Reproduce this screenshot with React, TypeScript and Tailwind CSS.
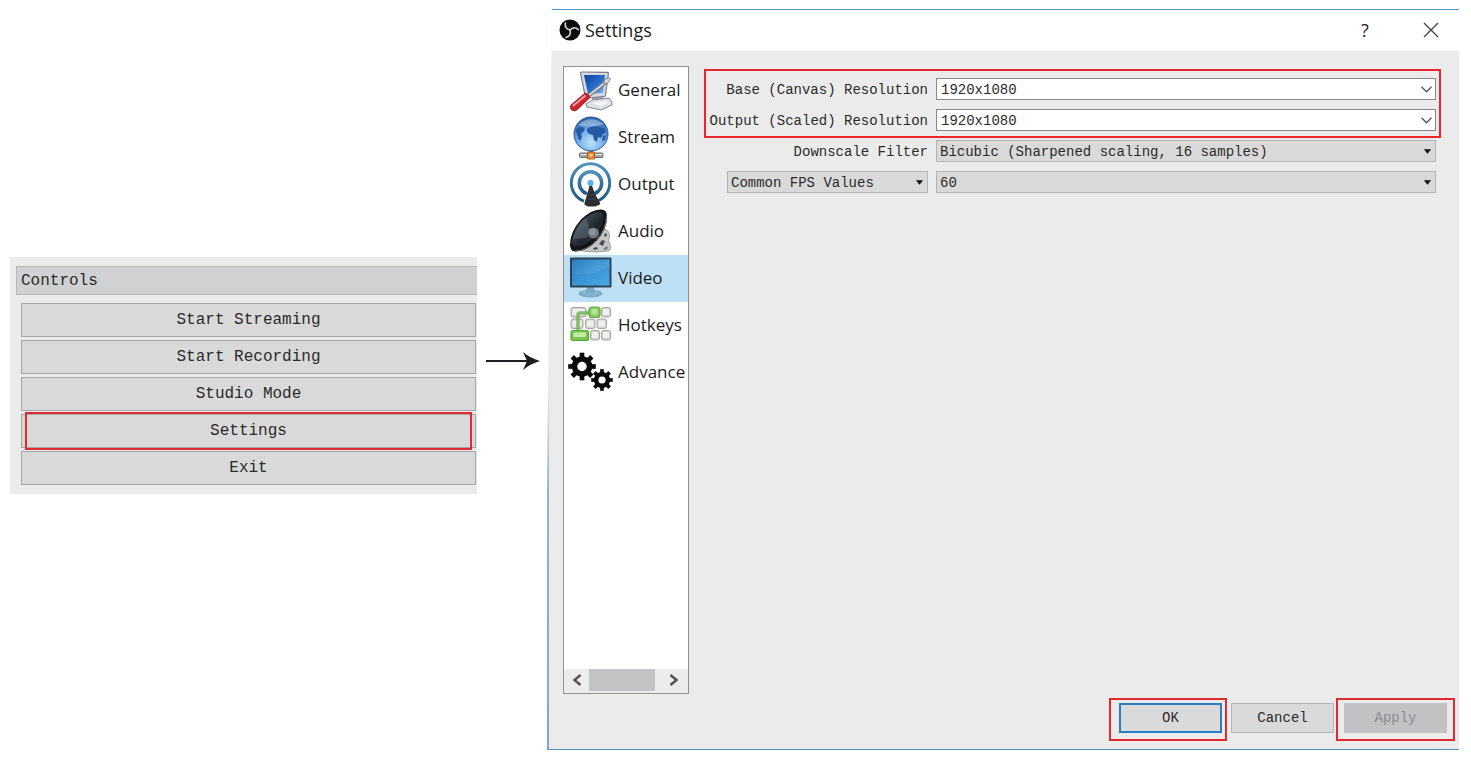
import { useState } from "react";
import type { ReactNode } from "react";

const mono = "font-['Liberation_Mono','Noto_Sans_CJK_SC',monospace]";
const sans = "font-['Open_Sans','Noto_Sans',sans-serif]";

function ObsLogo() {
  return (
    <svg viewBox="0 0 22 22" className="w-[22px] h-[22px] flex-shrink-0" aria-hidden="true">
      <circle cx="11" cy="11" r="10.5" fill="#0b0b0b" />
      <g fill="none" stroke="#cfcfcf" strokeWidth="1.7" strokeLinecap="round">
        <path d="M6.500 4C5.500 7.500 7.500 10.500 11 11" />
        <path d="M6.500 4C5.500 7.500 7.500 10.500 11 11" transform="rotate(120 11 11)" />
        <path d="M6.500 4C5.500 7.500 7.500 10.500 11 11" transform="rotate(240 11 11)" />
      </g>
    </svg>
  );
}

function GeneralIcon() {
  return (
    <>
      <defs>
        <linearGradient id="screen" x1="0" y1="0" x2="1" y2="1">
          <stop offset="0" stopColor="#0b3f9c" />
          <stop offset="0.6" stopColor="#2f74d0" />
          <stop offset="1" stopColor="#8fbdf0" />
        </linearGradient>
      </defs>
      <path d="M24 29l9-1 2 6-11 2z" fill="#9fa3ae" />
      <path d="M18 37l6-4 17-2 3 4v3l-11 5-14-3z" fill="#dfe1e8" stroke="#85878f" strokeWidth="1" />
      <path d="M24 36l14-2 2 2-8 3z" fill="#f6f6fa" />
      <path d="M12.500 6q0-1 1-1l26 .3q1 0 .9 1L37.500 28q-.2 1.500-1.500 1.600L19 31q-1.400 0-1.700-1.400z" fill="#d8dae2" stroke="#777a84" strokeWidth="1.200" />
      <path d="M16 8h21L35 26l-15 1z" fill="url(#screen)" />
      <path d="M20 29L38 15" stroke="#6f7177" strokeWidth="3.500" />
      <path d="M20.500 28.500L38.500 14.500" stroke="#d4d5d8" strokeWidth="2" />
      <path d="M36 13l5-2.500 1.500 1.500-3 4.500-3.500.5z" fill="#d5d6da" stroke="#6f7177" strokeWidth=".8" />
      <path d="M3 38L16.500 26.500q1.500-1 3 .500l1.500 1.500q1.500 1.500 0 3L9.500 42.500q-3 2.500-5.700.6Q1.500 41 3 38z" fill="#c9252d" stroke="#8c1419" strokeWidth=".8" />
      <path d="M5.500 38.500L17 29" stroke="#f39a9a" strokeWidth="2.200" strokeLinecap="round" />
    </>
  );
}

function StreamIcon() {
  return (
    <>
      <defs>
        <radialGradient id="globe" cx=".5" cy=".75" r=".75">
          <stop offset="0" stopColor="#c0e3fb" />
          <stop offset=".5" stopColor="#72aee8" />
          <stop offset="1" stopColor="#2758aa" />
        </radialGradient>
      </defs>
      <rect x="20.500" y="34" width="5" height="6" fill="#8b8d90" />
      <rect x="11.500" y="39" width="23.500" height="4.500" rx="1" fill="#a5a6a8" stroke="#66686b" strokeWidth="1" />
      <path d="M12.500 40.500h22" stroke="#e5e5e5" strokeWidth="1" />
      <rect x="19.500" y="38" width="7" height="7" rx="1" fill="#f08a35" stroke="#a9581b" strokeWidth="1" />
      <rect x="21.500" y="40" width="3" height="2.500" fill="#ffd09a" />
      <circle cx="23" cy="20" r="17" fill="url(#globe)" stroke="#2c59a4" strokeWidth="1" />
      <path d="M7.500 17q1-3 3.500-4l4 .500 2 1.500-2 3-2 2 1 3-2 4-2-3-1-4z" fill="#2559a4" />
      <path d="M19 15l3-2 7-1 7 2 2 4-3 2-2 4-3-1-1 5-3-2-1-5-4-1-2-3z" fill="#2559a4" />
      <path d="M35 22l3-1-1 5-3 1z" fill="#2559a4" />
      <path d="M10 11Q22 0 36 10 24 14 10 11z" fill="#fff" opacity=".35" />
    </>
  );
}

function OutputIcon() {
  return (
    <>
      <defs>
        <linearGradient id="rings" x1="0" y1="0" x2="0" y2="1">
          <stop offset="0" stopColor="#4f92bd" />
          <stop offset="1" stopColor="#1f587e" />
        </linearGradient>
      </defs>
      <circle cx="22.500" cy="22" r="19.200" fill="#fff" stroke="url(#rings)" strokeWidth="3" />
      <circle cx="22.500" cy="22" r="11.200" fill="none" stroke="url(#rings)" strokeWidth="3.500" />
      <path d="M22.500 24L14 45h18z" fill="#fff" />
      <path d="M22 23h1.500l3 9 5.500 10q.5 1.500-1 2l-4 1.500h-7L17 44q-1-.5-.500-2l3-10z" fill="#2b2d2f" />
      <path d="M21 30h3M20 34h6M19 38h8" stroke="#45494c" strokeWidth="1" />
      <circle cx="22.500" cy="22" r="3" fill="#55b4e6" />
    </>
  );
}

function AudioIcon() {
  return (
    <>
      <defs>
        <linearGradient id="cone" x1="0" y1="0" x2="1" y2="1">
          <stop offset="0" stopColor="#59636d" />
          <stop offset=".6" stopColor="#1f262d" />
          <stop offset="1" stopColor="#4b5560" />
        </linearGradient>
      </defs>
      <path d="M34 20l6 3q2 2 1.500 6l-1 3 2 6q.500 4-2 5l-13 1-13-1z" fill="#c3c5c7" stroke="#8d8f91" strokeWidth=".8" />
      <path d="M31 36l3-4 3 1-2 5zM37 25l2 1-1 3-2-1zM25 40l4-1 1 2-4 1z" fill="#4a4d50" />
      <path d="M35 41l4-3 1 2-2 2z" fill="#77797b" />
      <path d="M33 1.500q6 0 6 7 0 13-10 24Q19 43.500 7 43.500q-5-.5-5-7Q2 24 13 11.500 24 1 33 1.500z" fill="#121619" />
      <path d="M32 4q4 .5 3.500 6-1 9-9.500 18.500Q17 38.500 8 38.500q-4-.5-4-5Q4.500 23 14 12.500 24 3.500 32 4z" fill="url(#cone)" />
      <path d="M38.500 8q0 13-10 24Q19 43 7 43" fill="none" stroke="#6c7379" strokeWidth="1" />
      <path d="M5 31Q8 18 18 10l4 12-3 8z" fill="#8592a0" opacity=".35" />
      <circle cx="25.500" cy="25" r="5.500" fill="#6e747b" />
      <circle cx="24.500" cy="24" r="3.500" fill="#8c939a" />
    </>
  );
}

function VideoIcon() {
  return (
    <>
      <defs>
        <linearGradient id="display" x1="0" y1="0" x2="1" y2="1">
          <stop offset="0" stopColor="#1c71b8" />
          <stop offset=".5" stopColor="#3b95d6" />
          <stop offset="1" stopColor="#4aa6e2" />
        </linearGradient>
      </defs>
      <ellipse cx="22.500" cy="38.500" rx="12" ry="4" fill="#7eacc8" />
      <ellipse cx="22.500" cy="37.500" rx="9" ry="2.300" fill="#89b6d0" />
      <path d="M19 32h7l1 6h-9z" fill="#7ba9c5" />
      <rect x="2" y="2.500" width="41.500" height="30" rx="1" fill="#2b4558" />
      <rect x="4" y="4.500" width="37.500" height="26" fill="url(#display)" />
      <path d="M4 4.500H41.500v6Q25 22 4 19z" fill="#fff" opacity=".08" />
    </>
  );
}

const grayKeys = [
  [3, 5.5, 15],
  [33.5, 5.5, 9],
  [3, 17, 12],
  [17.5, 17, 9.5],
  [29, 17, 9.5],
  [22.5, 28.5, 9],
  [33.5, 28.5, 9],
];

function HotkeysIcon() {
  return (
    <>
      {grayKeys.map(([x, y, w]) => (
        <g key={`${x}-${y}`}>
          <rect x={x} y={y} width={w} height="9.500" rx="2" fill="#d3d4d2" stroke="#a3a5a2" strokeWidth="1" />
          <rect x={x + 1.5} y={y + 1.5} width={w - 3} height="6" rx="1" fill="#f0f0ef" />
        </g>
      ))}
      <path d="M10 30V13q0-2 2-2h12" fill="none" stroke="#72b450" strokeWidth="3.500" opacity=".85" />
      <rect x="21" y="5" width="11" height="10.500" rx="3" fill="#8ccd65" stroke="#5aa63a" strokeWidth="1.200" />
      <rect x="23.500" y="7" width="6" height="5.500" rx="1.500" fill="#b6e597" />
      <rect x="3" y="28.500" width="17.500" height="10" rx="2" fill="#7cc453" stroke="#5aa63a" strokeWidth="1.200" />
      <rect x="5.500" y="30.500" width="12.500" height="4.500" rx="1" fill="#c1eba7" />
    </>
  );
}

function Gear({ cx, cy, r, hole }: { cx: number; cy: number; r: number; hole: number }) {
  return (
    <g transform={`translate(${cx} ${cy})`}>
      {[0, 45, 90, 135].map((angle) => (
        <rect key={angle} x={-r * 0.17} y={-r} width={r * 0.34} height={r * 2} transform={`rotate(${angle})`} fill="#0a0a0a" />
      ))}
      <circle r={r * 0.75} fill="#0a0a0a" />
      <circle r={hole} fill="#fff" />
    </g>
  );
}

function AdvancedIcon() {
  return (
    <>
      <Gear cx={14} cy={17.5} r={13.8} hole={4.7} />
      <Gear cx={34} cy={31} r={10.8} hole={3.6} />
    </>
  );
}

const pages = [
  { label: "General", icon: <GeneralIcon /> },
  { label: "Stream", icon: <StreamIcon /> },
  { label: "Output", icon: <OutputIcon /> },
  { label: "Audio", icon: <AudioIcon /> },
  { label: "Video", icon: <VideoIcon /> },
  { label: "Hotkeys", icon: <HotkeysIcon /> },
  { label: "Advance", icon: <AdvancedIcon /> },
];

const controls = ["Start Streaming", "Start Recording", "Studio Mode", "Settings", "Exit"];

function ControlsDock() {
  return (
    <section className={`w-[467px] flex-shrink-0 self-start mt-[248px] pt-[9px] pb-[9px] pl-[6px] bg-[#ebebeb] text-[#2b2b2b] text-base ${mono}`}>
      <h2 className="h-[29px] flex items-center pl-1 bg-[#cfd1d2] border border-r-0 border-[#b4b6b8]">Controls</h2>
      <div className="flex flex-col gap-[3px] mt-2 pl-[5px] pr-px">
        {controls.map((label) => (
          <div key={label} className="relative">
            <button type="button" className="block w-full h-[34px] bg-[#d9d9d9] border border-[#a6a6a8]">
              {label}
            </button>
            {label === "Settings" && (
              <div className="absolute -inset-y-0.5 inset-x-1 border-2 border-[#e02a2f] pointer-events-none" />
            )}
          </div>
        ))}
      </div>
    </section>
  );
}

function Sidebar() {
  const [active, setActive] = useState("Video");
  return (
    <aside className={`w-[126px] flex-shrink-0 flex flex-col bg-white border border-[#8f9193] text-[17px] text-[#1c1c1c] ${sans}`}>
      <nav className="flex-1 overflow-hidden">
        {pages.map((page) => (
          <button
            key={page.label}
            type="button"
            onClick={() => setActive(page.label)}
            className={`flex items-center gap-1 w-full h-[47px] pl-1 whitespace-nowrap ${active === page.label ? "bg-[#bde0f4]" : ""}`}
          >
            <svg viewBox="0 0 46 47" className="w-[46px] h-[47px] flex-shrink-0" aria-hidden="true">
              {page.icon}
            </svg>
            {page.label}
          </button>
        ))}
      </nav>
      <div className="flex h-6 pb-0.5 bg-[#ececec]">
        <button type="button" aria-label="Scroll left" className="w-[25px] flex items-center justify-center">
          <svg viewBox="0 0 10 12" className="w-[10px] h-3" fill="none" stroke="#555" strokeWidth="2.500">
            <path d="M8.500 1L2.500 6l6 5" />
          </svg>
        </button>
        <div className="w-[66px] bg-[#c1c3c4]" />
        <button type="button" aria-label="Scroll right" className="flex-1 flex items-center justify-center pl-1">
          <svg viewBox="0 0 10 12" className="w-[10px] h-3" fill="none" stroke="#555" strokeWidth="2.500">
            <path d="M1.500 1l6 5-6 5" />
          </svg>
        </button>
      </div>
    </aside>
  );
}

interface DropdownProps {
  id: string;
  options: string[];
  variant?: "combo" | "list";
  label?: string;
  className?: string;
}

function Dropdown({ id, options, variant = "list", label, className = "" }: DropdownProps) {
  return (
    <div className={`relative ${className}`}>
      <select
        id={id}
        aria-label={label}
        className={`block w-full h-[22px] pt-px appearance-none border outline-none ${
          variant === "combo" ? "bg-white border-[#86888c] pl-1" : "bg-[#d9d9d9] border-[#b2b3b5] pl-[3px]"
        }`}
      >
        {options.map((option) => (
          <option key={option}>{option}</option>
        ))}
      </select>
      <span className="absolute right-1 inset-y-0 flex items-center pointer-events-none">
        {variant === "combo" ? (
          <svg viewBox="0 0 11 7" className="w-[11px] h-[7px]" fill="none" stroke="#555" strokeWidth="1.300">
            <path d="M.5.800l5 5 5-5" />
          </svg>
        ) : (
          <svg viewBox="0 0 9 5" className="w-[9px] h-[5px]" fill="#111">
            <path d="M.8.300h7.400L4.500 4.700z" />
          </svg>
        )}
      </span>
    </div>
  );
}

function FormRow({ label, id, children }: { label: string; id: string; children: ReactNode }) {
  return (
    <div className="grid grid-cols-[222px_1fr] gap-x-2 items-center">
      <label htmlFor={id} className="pt-0.5 text-right whitespace-nowrap">
        {label}
      </label>
      {children}
    </div>
  );
}

function VideoForm() {
  return (
    <form className="flex-1 min-w-0 mt-[3px] mr-[18px]">
      <div className="flex flex-col gap-[9px] border-2 border-[#e8262b] pt-[7px] pb-[5px] pr-[3px]">
        <FormRow label="Base (Canvas) Resolution" id="base">
          <Dropdown id="base" variant="combo" options={["1920x1080", "1280x720"]} />
        </FormRow>
        <FormRow label="Output (Scaled) Resolution" id="output">
          <Dropdown id="output" variant="combo" options={["1920x1080", "1280x720"]} />
        </FormRow>
      </div>
      <div className="flex flex-col gap-[9px] mt-0.5 pl-0.5 pr-[5px]">
        <FormRow label="Downscale Filter" id="filter">
          <Dropdown id="filter" options={["Bicubic (Sharpened scaling, 16 samples)"]} />
        </FormRow>
        <div className="grid grid-cols-[222px_1fr] gap-x-2">
          <Dropdown id="fps-type" label="FPS type" className="ml-[21px]" options={["Common FPS Values", "Integer FPS Value"]} />
          <Dropdown id="fps" label="FPS" options={["60", "30"]} />
        </div>
      </div>
    </form>
  );
}

function SettingsWindow() {
  return (
    <section className="relative flex-1 min-w-0 flex flex-col bg-[#ebebeb] border-y border-[#4f93c8] [clip-path:polygon(5px_0,100%_0,100%_100%,0_100%,0_65%)]">
      <div className="absolute left-0 top-1/2 bottom-0 w-0.5 bg-linear-to-b from-[#ebebeb] via-[#8fb4d4] via-30% to-[#7fa8cb]" />
      <header className={`flex items-center gap-1 h-[41px] pb-0.5 pl-3 pr-5 bg-white text-[#1c1c1c] ${sans}`}>
        <ObsLogo />
        <h1 className="flex-1 text-lg">Settings</h1>
        <button type="button" className="w-8 mr-[38px] text-lg" aria-label="Help">
          ?
        </button>
        <button type="button" aria-label="Close">
          <svg viewBox="0 0 16 16" className="w-4 h-4" stroke="#444" strokeWidth="1.400">
            <path d="M1 1l14 14M15 1L1 15" />
          </svg>
        </button>
      </header>
      <div className={`flex-1 flex flex-col text-sm text-[#2b2b2b] ${mono}`}>
        <div className="flex-1 flex gap-[15px] pt-[15px] pl-4">
          <Sidebar />
          <VideoForm />
        </div>
        <footer className="flex justify-end items-start pt-1 pb-2 pr-1">
          <div className="h-[43px] border-2 border-[#e02a2f] pt-[3px] pl-2 pr-[3px]">
            <button type="button" className="block w-[103px] h-[30px] bg-[#dadada] border-2 border-[#2a7dc0]">
              OK
            </button>
          </div>
          <button type="button" className="w-[103px] h-[30px] mt-[5px] ml-1 mr-0.5 bg-[#d9d9d9] border border-[#b5b6b8]">
            Cancel
          </button>
          <div className="h-[43px] border-2 border-[#e02a2f] pt-[3px] px-1.5">
            <button type="button" disabled className="block w-[103px] h-[30px] bg-[#c0c2c3] text-[#8b8d8f]">
              Apply
            </button>
          </div>
        </footer>
      </div>
    </section>
  );
}

export default function App() {
  return (
    <main className="flex min-h-screen bg-white pt-[9px] pb-4 pl-[10px] pr-3">
      <ControlsDock />
      <div className="w-[70px] flex-shrink-0 mt-[342px] pl-[9px]">
        <svg viewBox="0 0 54 20" className="w-[54px] h-5" fill="#1d1d1f" aria-hidden="true">
          <path d="M0 9h42v2H0z" />
          <path d="M37 1q7 6 17 9-10 3-17 9l4-9z" />
        </svg>
      </div>
      <SettingsWindow />
    </main>
  );
}
